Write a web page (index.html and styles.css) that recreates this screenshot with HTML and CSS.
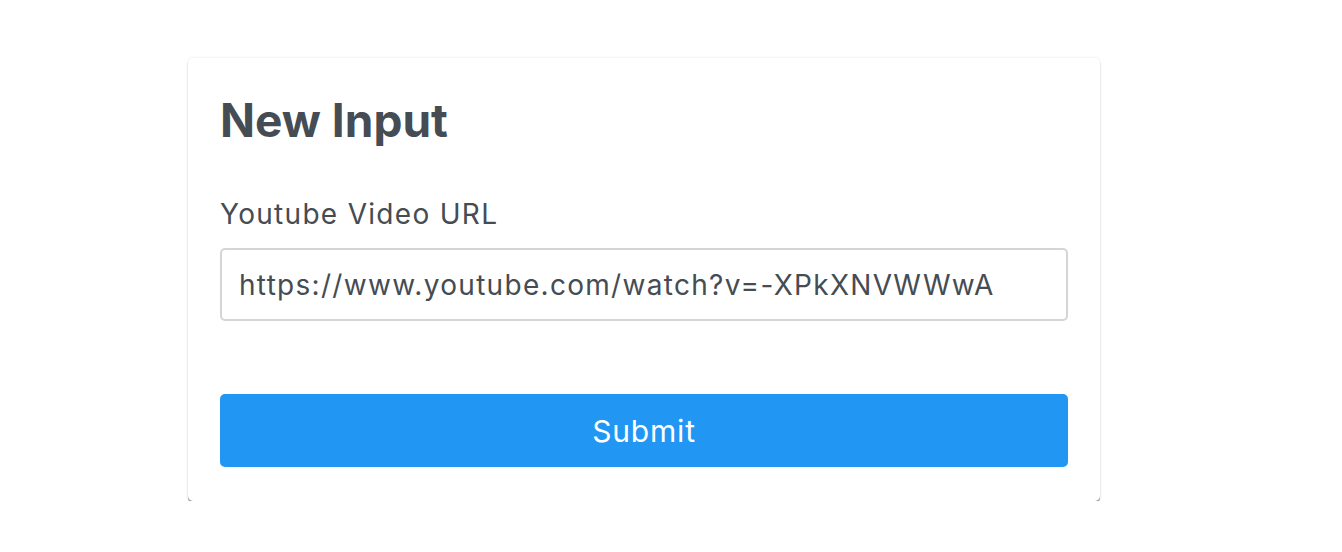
FILE: index.html
```html
<!DOCTYPE html>
<html lang="en">
<head>
    <meta charset="UTF-8">
    <meta name="viewport" content="width=device-width, initial-scale=1.0">
    <title>New Input</title>
    <link rel="stylesheet" href="styles.css">
</head>
<body>
    <div class="card">
        <h1>New Input</h1>
        <form class="input-form">
            <label for="videoUrl">Youtube Video URL</label>
            <input type="text" id="videoUrl" value="https://www.youtube.com/watch?v=-XPkXNVWWwA">
            <button type="submit" id="submitBtn">Submit</button>
        </form>
    </div>
</body>
</html>
```

FILE: styles.css
```css
body {
    font-family: Inter, "Noto Sans", sans-serif;
    background-color: #ffffff;
    color: #454c53;
    margin: 0;
    padding: 58px 0 0 188px;
}
.card {
    width: 912px;
    box-sizing: border-box;
    padding: 32px 32px 34px 32px;
    background-color: #ffffff;
    border-radius: 5px;
    box-shadow: 0 2px 1px rgba(0, 0, 0, 0.4), 0 0 3px rgba(0, 0, 0, 0.1);
}
h1 {
    font-size: 46px;
    font-weight: 700;
    margin: 0 0 46px 0;
    line-height: 60px;
}
.input-form {
    display: flex;
    flex-direction: column;
}
label {
    font-size: 28px;
    line-height: 36px;
    letter-spacing: 1.3px;
    margin-bottom: 16px;
}
#videoUrl {
    font-family: inherit;
    font-size: 28px;
    letter-spacing: 1.3px;
    color: #454c53;
    height: 73px;
    box-sizing: border-box;
    padding: 0 17px;
    border: 2px solid #d3d6d9;
    border-radius: 5px;
    margin-bottom: 73px;
}
#submitBtn {
    font-family: inherit;
    font-size: 30px;
    letter-spacing: 0.8px;
    height: 73px;
    background-color: #2196f3;
    color: #ffffff;
    border: none;
    border-radius: 5px;
    cursor: pointer;
}
```
